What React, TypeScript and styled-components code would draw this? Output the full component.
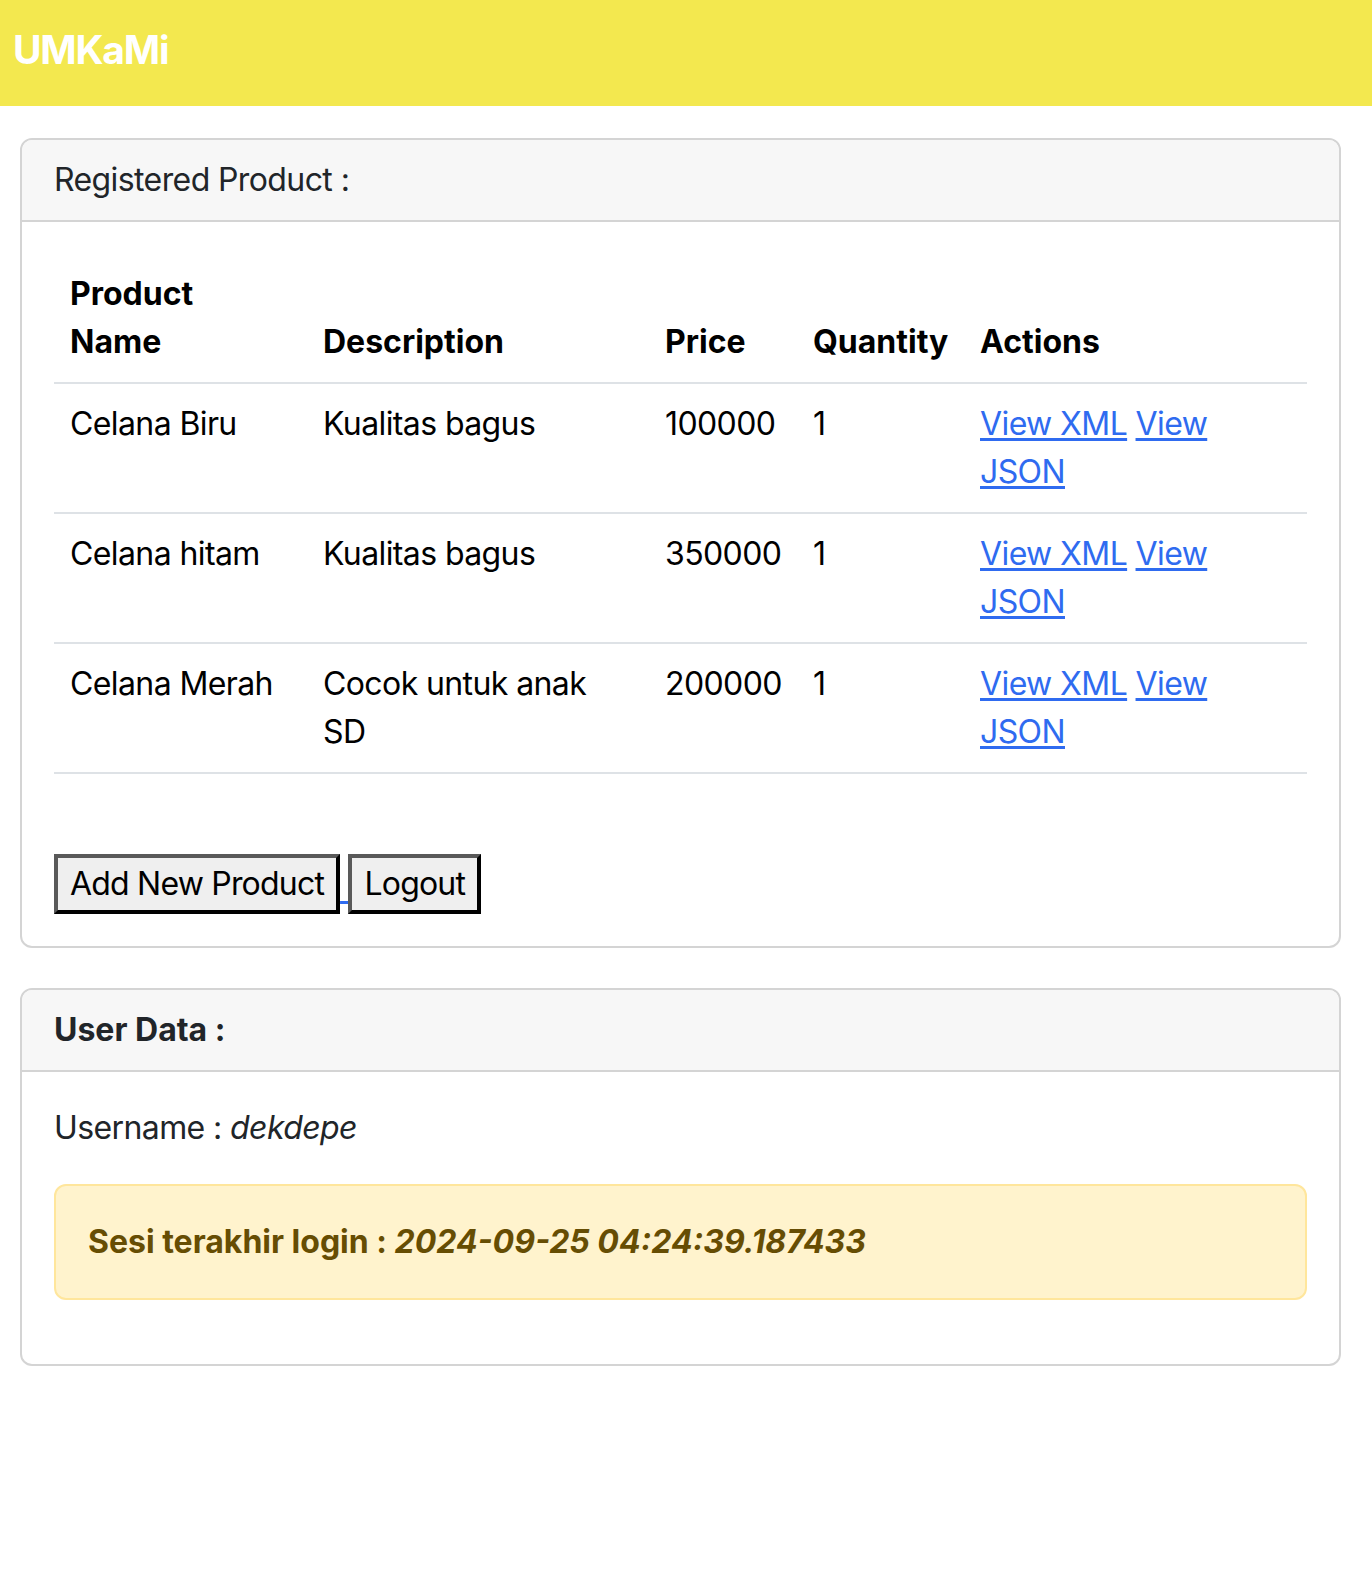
import React from "react";
import styled, { createGlobalStyle } from "styled-components";

const GlobalStyle = createGlobalStyle`
  html, body {
    margin: 0;
    padding: 0;
    background: #ffffff;
  }
  body {
    font-family: Inter, "Noto Sans", "Liberation Sans", sans-serif;
    font-size: 32px;
    line-height: 48px;
    letter-spacing: -0.6px;
    color: #212529;
  }
  * {
    box-sizing: border-box;
  }
`;

const Navbar = styled.nav`
  height: 106px;
  background-color: #f3e84f;
  display: flex;
  align-items: flex-start;
  padding: 20px 13px 0;
`;

const Brand = styled.a`
  font-size: 39px;
  line-height: 60px;
  font-weight: 700;
  color: #ffffff;
  text-decoration: none;
  letter-spacing: -1.2px;
`;

const Page = styled.main`
  display: flex;
  flex-direction: column;
  gap: 40px;
  padding: 32px 0 0 20px;
  width: 1341px;
`;

const Card = styled.section`
  border: 2px solid #d4d4d4;
  border-radius: 12px;
  overflow: hidden;
  background: #ffffff;
`;

const CardHeader = styled.header<{ bold?: boolean }>`
  background-color: #f7f7f7;
  border-bottom: 2px solid #d4d4d4;
  padding: 16px 32px;
  font-weight: ${({ bold }) => (bold ? 700 : 400)};
  letter-spacing: ${({ bold }) => (bold ? "0" : "-0.6px")};
  color: #212529;
`;

const CardBody = styled.div`
  padding: 32px;
`;

const Table = styled.table`
  width: 100%;
  border-collapse: collapse;
  table-layout: fixed;
  margin-bottom: 32px;
  color: #000000;
`;

const HeadCell = styled.th`
  text-align: left;
  font-weight: 700;
  letter-spacing: 0;
  vertical-align: bottom;
  padding: 16px;
  border-bottom: 2px solid #dee2e6;
`;

const Cell = styled.td`
  vertical-align: top;
  padding: 16px;
  border-bottom: 2px solid #dee2e6;
`;

const Wrap = styled.span<{ max: number }>`
  display: inline-block;
  max-width: ${({ max }) => max}px;
`;

const LinkText = styled.a`
  color: #2f6bf0;
  text-decoration: underline;
  text-underline-offset: 3px;
`;

const ButtonRow = styled.div`
  padding-top: 48px;
  line-height: 48px;
`;

const ButtonLink = styled.a`
  color: #2f6bf0;
  text-decoration: underline;
  text-underline-offset: 6px;
`;

const Button = styled.button`
  font: inherit;
  font-size: 32px;
  line-height: 48px;
  letter-spacing: -0.8px;
  color: #000000;
  background-color: #efefef;
  border-style: solid;
  border-width: 4px;
  border-color: #595959 #000000 #000000 #595959;
  padding: 2px 12px;
  margin: 0;
  border-radius: 0;
  vertical-align: baseline;
  cursor: pointer;
`;

const Text = styled.p`
  margin: 0 0 32px;
`;

const Alert = styled.div`
  background-color: #fff3cd;
  border: 2px solid #ffe69c;
  border-radius: 12px;
  padding: 32px;
  margin-bottom: 32px;
  color: #664d03;
  font-weight: 700;
  letter-spacing: 0;
`;

const products = [
  { name: "Celana Biru", desc: "Kualitas bagus", price: 100000, qty: 1 },
  { name: "Celana hitam", desc: "Kualitas bagus", price: 350000, qty: 1 },
  { name: "Celana Merah", desc: "Cocok untuk anak SD", price: 200000, qty: 1 },
];

const App: React.FC = () => {
  return (
    <>
      <GlobalStyle />
      <Navbar>
        <Brand href="#">UMKaMi</Brand>
      </Navbar>
      <Page>
        <Card>
          <CardHeader>Registered Product :</CardHeader>
          <CardBody>
            <Table>
              <colgroup>
                <col style={{ width: 253 }} />
                <col style={{ width: 342 }} />
                <col style={{ width: 148 }} />
                <col style={{ width: 167 }} />
                <col />
              </colgroup>
              <thead>
                <tr>
                  <HeadCell>
                    <Wrap max={150}>Product Name</Wrap>
                  </HeadCell>
                  <HeadCell>Description</HeadCell>
                  <HeadCell>Price</HeadCell>
                  <HeadCell>Quantity</HeadCell>
                  <HeadCell>Actions</HeadCell>
                </tr>
              </thead>
              <tbody>
                {products.map((p) => (
                  <tr key={p.name}>
                    <Cell>{p.name}</Cell>
                    <Cell>
                      <Wrap max={280}>{p.desc}</Wrap>
                    </Cell>
                    <Cell>{p.price}</Cell>
                    <Cell>{p.qty}</Cell>
                    <Cell>
                      <Wrap max={250}>
                        <LinkText href="#">View XML</LinkText>{" "}
                        <LinkText href="#">View JSON</LinkText>
                      </Wrap>
                    </Cell>
                  </tr>
                ))}
              </tbody>
            </Table>
            <ButtonRow>
              <ButtonLink href="#">
                <Button>Add New Product</Button>{" "}
              </ButtonLink>
              <ButtonLink href="#">
                <Button>Logout</Button>
              </ButtonLink>
            </ButtonRow>
          </CardBody>
        </Card>
        <Card>
          <CardHeader bold>User Data :</CardHeader>
          <CardBody>
            <Text>
              Username : <i>dekdepe</i>
            </Text>
            <Alert>
              Sesi terakhir login : <i>2024-09-25 04:24:39.187433</i>
            </Alert>
          </CardBody>
        </Card>
      </Page>
    </>
  );
};

export default App;
